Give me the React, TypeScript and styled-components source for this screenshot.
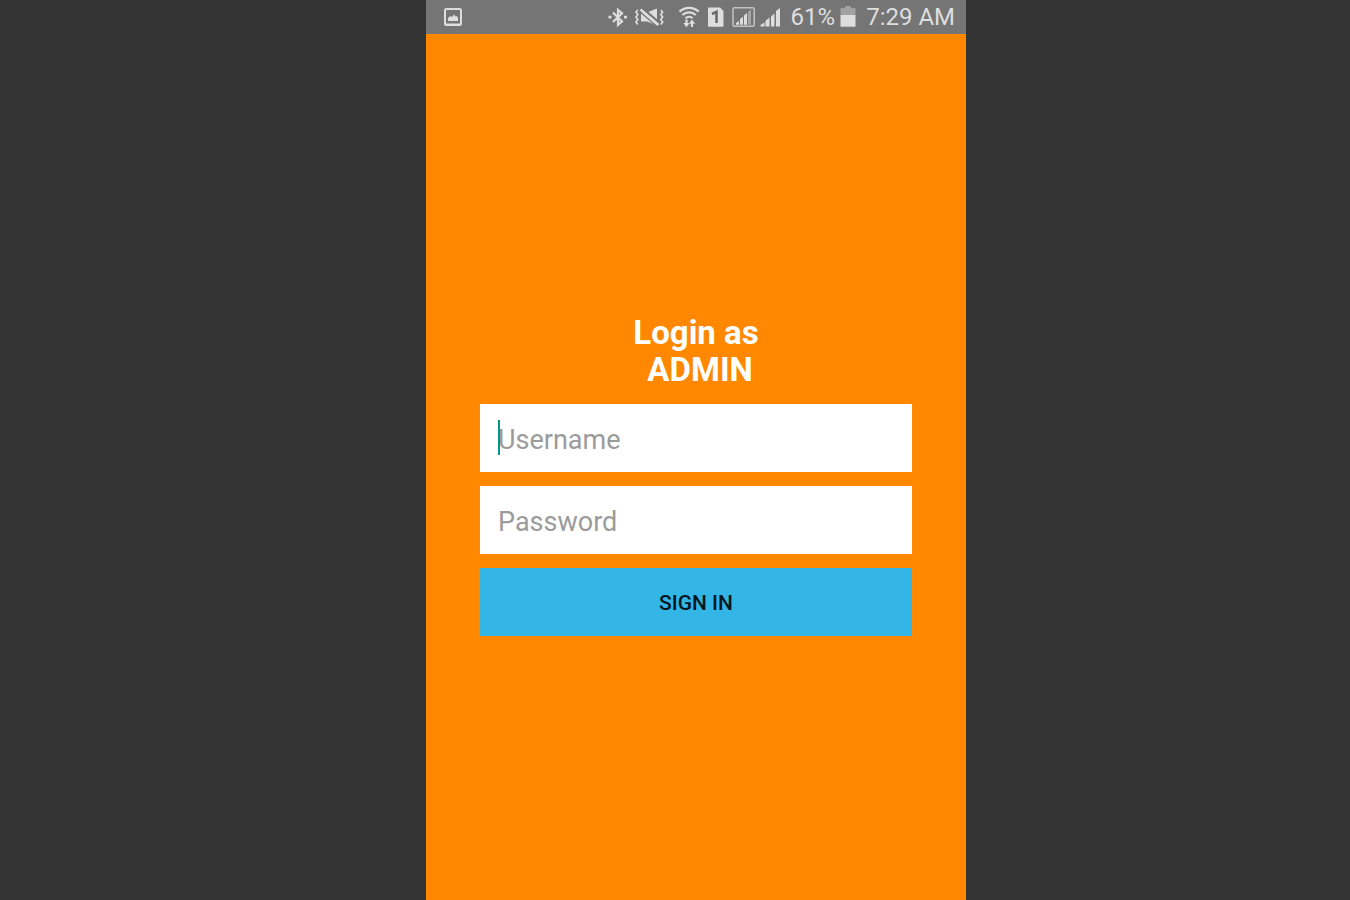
import React, { useState } from "react";
import styled, { createGlobalStyle } from "styled-components";

const GlobalStyle = createGlobalStyle`
  *, *::before, *::after { box-sizing: border-box; }
  body {
    margin: 0;
    background: #333333;
    font-family: Roboto, "Liberation Sans", sans-serif;
  }
`;

const Stage = styled.div`
  display: flex;
  justify-content: center;
  min-height: 100vh;
  padding-left: 42px;
  background: #333333;
`;

const Phone = styled.div`
  display: flex;
  flex-direction: column;
  width: 100%;
  max-width: 540px;
  background: #ff8800;
`;

const StatusBar = styled.header`
  display: flex;
  align-items: center;
  justify-content: space-between;
  height: 34px;
  padding: 0 11px 0 18px;
  background: #757575;
  color: #dedede;
`;

const StatusGroup = styled.div`
  display: flex;
  align-items: center;
`;

const Icon = styled.svg<{ $after?: number }>`
  display: block;
  flex: none;
  margin-right: ${({ $after = 0 }) => $after}px;
`;

const StatusText = styled.span<{ $after?: number }>`
  margin-right: ${({ $after = 0 }) => $after}px;
  font-size: 24px;
  line-height: 34px;
  white-space: nowrap;
`;

const Screen = styled.main`
  display: flex;
  flex: 1;
  flex-direction: column;
  justify-content: center;
  padding: 0 10%;
`;

const Form = styled.form`
  display: flex;
  flex-direction: column;
  gap: 14px;
`;

const Title = styled.h1`
  margin: 0;
  padding: 16px 0 2px;
  color: #ffffff;
  font-size: 33px;
  font-weight: 700;
  line-height: 37px;
  text-align: center;
  white-space: pre;
`;

const Field = styled.div`
  position: relative;
  display: flex;
`;

const Input = styled.input`
  width: 100%;
  height: 68px;
  padding: 4px 18px 0;
  border: 0;
  border-radius: 0;
  outline: none;
  background: #ffffff;
  color: #222222;
  font-family: inherit;
  font-size: 27px;
  caret-color: #009688;

  &::placeholder {
    color: #9b9b9b;
    opacity: 1;
  }
`;

const Caret = styled.span`
  position: absolute;
  top: 16px;
  left: 18px;
  width: 2px;
  height: 35px;
  background: #009688;
`;

const SignIn = styled.button`
  height: 68px;
  padding: 2px 0 0;
  border: 0;
  background: #33b5e5;
  color: #08161c;
  font-family: inherit;
  font-size: 21px;
  font-weight: 500;
  cursor: pointer;
`;

const PictureIcon = () => (
  <Icon width="18" height="34" viewBox="0 0 18 34" aria-hidden="true">
    <rect x="1" y="9" width="16" height="16" rx="1.5" fill="none" stroke="#dedede" strokeWidth="2" />
    <path d="M4 21v-3l2.5-2 1.5 1 2.2-2.5 1.5 2 1-.8 1.3 2.3v3z" fill="#dedede" />
    <path d="M1 23.500h16V25H1z" fill="#dedede" />
  </Icon>
);

const BluetoothIcon = () => (
  <Icon $after={7} width="19" height="34" viewBox="0 0 19 34" aria-hidden="true">
    <path d="M5 12.500 14 21.500 10 24.800V9.800l4 3.400L5 22" fill="none" stroke="#dedede" strokeWidth="2.200" />
    <path d="M.5 15.800h3v2.700h-3zM16 15.800h3v2.700h-3z" fill="#dedede" />
  </Icon>
);

const MuteIcon = () => (
  <Icon $after={15} width="30" height="34" viewBox="0 0 30 34" aria-hidden="true">
    <path d="M7 12.500h6L23 8.600v17L13 21.500H7z" fill="#dedede" />
    <path d="M8 8 26 23.500" stroke="#757575" strokeWidth="2.500" />
    <path d="M6.500 9.500 24.500 25" stroke="#dedede" strokeWidth="2.500" />
    <path d="M5 11 23 26.500" stroke="#757575" strokeWidth="1.200" />
    <path
      d="M3.800 10 2 12l1.800 2.500L2 17l1.800 2.500L2 22l1.800 2.500M26.800 10l1.800 2-1.800 2.500 1.800 2.500-1.800 2.500 1.800 2.500-1.800 2.500"
      fill="none"
      stroke="#dedede"
      strokeWidth="1.700"
    />
  </Icon>
);

const WifiIcon = () => (
  <Icon $after={8} width="21" height="34" viewBox="0 0 21 34" aria-hidden="true">
    <g fill="none" stroke="#dedede" strokeWidth="2.200">
      <path d="M.5 11.600C5.800 6.500 14.400 6.500 19.700 11.600" />
      <path d="M3.500 15C7.200 11.400 13 11.400 16.700 15" />
      <path d="M6.600 18.200c2-1.800 5-1.800 7 0" />
      <path d="M7.500 19.500v5M13 27v-5" />
    </g>
    <path d="M4.300 23h6.400L7.500 27.200zM9.800 23.800h6.400L13 19.600z" fill="#dedede" />
  </Icon>
);

const SimIcon = () => (
  <Icon $after={8} width="16" height="34" viewBox="0 0 16 34" aria-hidden="true">
    <path d="M1 7.500h11L15.500 11v14.700a1 1 0 0 1-1 1H1a1 1 0 0 1-1-1V8.500a1 1 0 0 1 1-1z" fill="#dedede" />
    <path d="M4 14 8.500 11.800V23" fill="none" stroke="#6b6b6b" strokeWidth="2.600" />
  </Icon>
);

const BoxedSignalIcon = () => (
  <Icon $after={5} width="23" height="34" viewBox="0 0 23 34" aria-hidden="true">
    <rect x="1" y="7.750" width="21.200" height="18.500" rx="1.500" fill="none" stroke="#c4c4c4" strokeWidth="1.500" />
    <path d="M4 24.700v-1.700l3-2v3.700zM8 24.700v-5.500l3-2.700v8.200zM12 24.700v-9.200l3-2.500v11.700z" fill="#dedede" />
    <path d="M16 24.700v-12.700l3-2.500v15.200z" fill="#a6a6a6" />
  </Icon>
);

const SignalIcon = () => (
  <Icon $after={11} width="20" height="34" viewBox="0 0 20 34" aria-hidden="true">
    <path d="M.5 26.500v-1.500l4-2.500v4zM5.500 26.500v-5.500l4-3.500v9zM11 26.500v-10l3.500-3v13zM16 26.500v-15.500l4-3v18.500z" fill="#dedede" />
  </Icon>
);

const BatteryIcon = () => (
  <Icon $after={10} width="16" height="34" viewBox="0 0 16 34" aria-hidden="true">
    <path d="M.5 15V8H5V6h6v2h4.500v7z" fill="#a2a2a2" />
    <path d="M.5 15h15v11.700H.5z" fill="#dedede" />
  </Icon>
);

export default function App() {
  const [username, setUsername] = useState("");
  const [password, setPassword] = useState("");

  return (
    <>
      <GlobalStyle />
      <Stage>
        <Phone>
          <StatusBar>
            <PictureIcon />
            <StatusGroup>
              <BluetoothIcon />
              <MuteIcon />
              <WifiIcon />
              <SimIcon />
              <BoxedSignalIcon />
              <SignalIcon />
              <StatusText $after={5}>61%</StatusText>
              <BatteryIcon />
              <StatusText>7:29 AM</StatusText>
            </StatusGroup>
          </StatusBar>
          <Screen>
            <Form onSubmit={(event) => event.preventDefault()}>
              <Title>{"Login as\n ADMIN"}</Title>
              <Field>
                <Input
                  aria-label="Username"
                  placeholder="Username"
                  value={username}
                  onChange={(event) => setUsername(event.target.value)}
                />
                {username === "" && <Caret />}
              </Field>
              <Field>
                <Input
                  type="password"
                  aria-label="Password"
                  placeholder="Password"
                  value={password}
                  onChange={(event) => setPassword(event.target.value)}
                />
              </Field>
              <SignIn type="submit">SIGN IN</SignIn>
            </Form>
          </Screen>
        </Phone>
      </Stage>
    </>
  );
}
